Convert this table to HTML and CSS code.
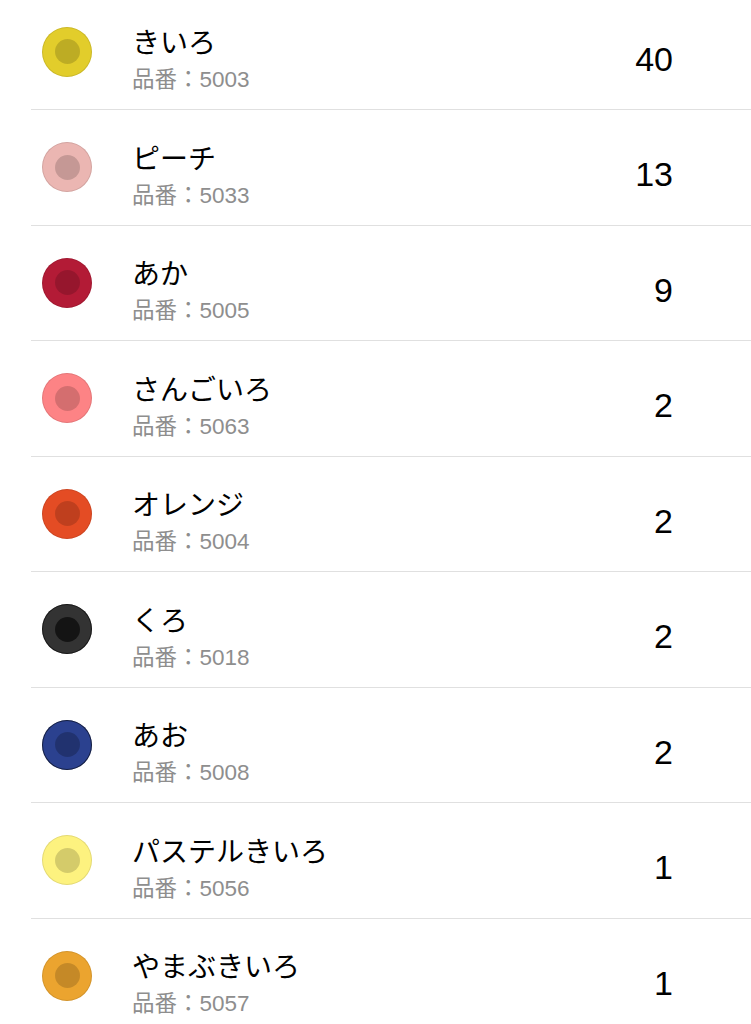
FILE: index.html
```html
<!DOCTYPE html>
<html lang="ja">
<head>
<meta charset="utf-8">
<title>Colors</title>
<link rel="stylesheet" href="styles.css">
</head>
<body>
<ul class="list">
  <li class="row">
    <span class="dot" style="background:#e2cd2b"></span>
    <div class="info"><div class="name">きいろ</div><div class="code">品番：5003</div></div>
    <div class="count">40</div>
  </li>
  <li class="row">
    <span class="dot" style="background:#ebb6b2"></span>
    <div class="info"><div class="name">ピーチ</div><div class="code">品番：5033</div></div>
    <div class="count">13</div>
  </li>
  <li class="row">
    <span class="dot" style="background:#b31b36"></span>
    <div class="info"><div class="name">あか</div><div class="code">品番：5005</div></div>
    <div class="count">9</div>
  </li>
  <li class="row">
    <span class="dot" style="background:#fd8385"></span>
    <div class="info"><div class="name">さんごいろ</div><div class="code">品番：5063</div></div>
    <div class="count">2</div>
  </li>
  <li class="row">
    <span class="dot" style="background:#e44c24"></span>
    <div class="info"><div class="name">オレンジ</div><div class="code">品番：5004</div></div>
    <div class="count">2</div>
  </li>
  <li class="row">
    <span class="dot dot-dark dot-black" style="background:#333333"></span>
    <div class="info"><div class="name">くろ</div><div class="code">品番：5018</div></div>
    <div class="count">2</div>
  </li>
  <li class="row">
    <span class="dot dot-dark" style="background:#2b418f"></span>
    <div class="info"><div class="name">あお</div><div class="code">品番：5008</div></div>
    <div class="count">2</div>
  </li>
  <li class="row">
    <span class="dot" style="background:#fdf27f"></span>
    <div class="info"><div class="name">パステルきいろ</div><div class="code">品番：5056</div></div>
    <div class="count">1</div>
  </li>
  <li class="row">
    <span class="dot" style="background:#eba42f"></span>
    <div class="info"><div class="name">やまぶきいろ</div><div class="code">品番：5057</div></div>
    <div class="count">1</div>
  </li>
</ul>
</body>
</html>
```
FILE: styles.css
```css
html, body {
  margin: 0;
  padding: 0;
  background: #ffffff;
}

body {
  font-family: "Liberation Sans", "Noto Sans CJK JP", sans-serif;
  color: #000000;
  overflow: hidden;
}

.list {
  list-style: none;
  margin: -5.5px 0 0 0;
  padding: 0 0 0 31px;
}

.row {
  display: flex;
  align-items: center;
  height: 114.5px;
  border-bottom: 1px solid #e0e0e0;
  padding-right: 78px;
}

.dot {
  flex: none;
  width: 50px;
  height: 50px;
  margin-left: 11px;
  border-radius: 50%;
  box-shadow: inset 0 0 0 1px rgba(0, 0, 0, 0.1);
  display: flex;
  align-items: center;
  justify-content: center;
}

.dot::after {
  content: "";
  width: 25px;
  height: 25px;
  border-radius: 50%;
  background: rgba(0, 0, 0, 0.16);
}

.dot-dark {
  box-shadow: inset 0 0 0 1px rgba(0, 0, 0, 0.55);
}

.dot-dark::after {
  background: rgba(0, 0, 0, 0.22);
}

.dot-black::after {
  background: rgba(0, 0, 0, 0.6);
}

.info {
  flex: 1;
  margin-left: 40px;
  padding-top: 16px;
}

.name {
  font-family: "Noto Sans CJK JP", sans-serif;
  font-size: 28px;
  line-height: 34px;
  color: #000000;
}

.code {
  margin-top: 7px;
  font-size: 22.5px;
  line-height: 30px;
  color: #8e8e8e;
}

.count {
  flex: none;
  padding-top: 14px;
  font-size: 34px;
  line-height: 40px;
  text-align: right;
}
```
